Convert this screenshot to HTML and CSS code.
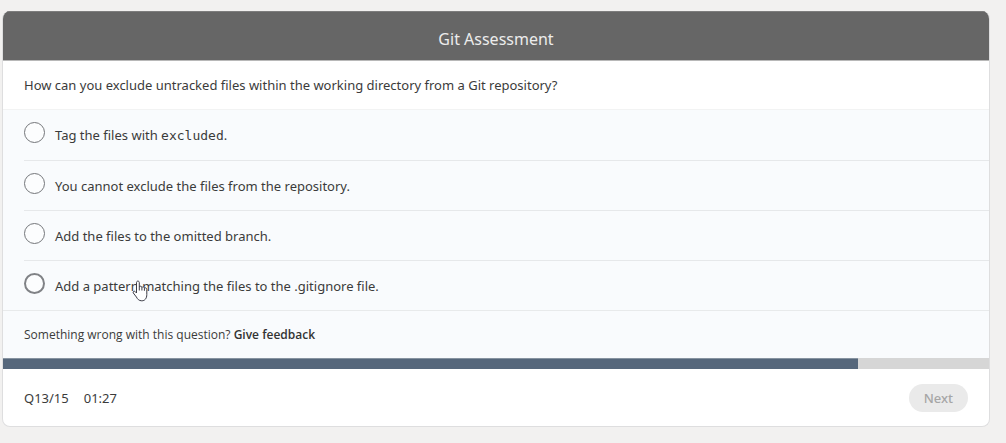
FILE: index.html
```html
<!DOCTYPE html>
<html lang="en">
<head>
<meta charset="utf-8">
<title>Git Assessment</title>
<link rel="stylesheet" href="styles.css">
</head>
<body>
<main class="card">
  <header class="card-header"><h1 class="title">Git Assessment</h1></header>
  <form class="quiz">
    <h2 class="question" id="question">How can you exclude untracked files within the working directory from a Git repository?</h2>
    <div class="options" role="radiogroup" aria-labelledby="question">
      <label class="option"><input class="radio" type="radio" name="answer"><span class="answer">Tag the files with <code class="code">excluded</code>.</span></label>
      <label class="option"><input class="radio" type="radio" name="answer"><span class="answer">You cannot exclude the files from the repository.</span></label>
      <label class="option"><input class="radio" type="radio" name="answer"><span class="answer">Add the files to the omitted branch.</span></label>
      <label class="option option-hover"><input class="radio" type="radio" name="answer"><span class="answer">Add a pattern matching the files to the .gitignore file.</span>
        <svg class="pointer" width="16" height="22" viewBox="0 0 16 22" aria-hidden="true"><path d="M4.5 13V2.6C4.5.6 7.3.6 7.3 2.6V7C7.6 5.8 9.8 5.9 9.9 7.5 10.4 6.3 12.4 6.7 12.4 8.2 13.1 7.4 14.8 7.8 14.8 9.4V14.5C14.8 18.5 12.8 20.8 9.8 20.8 6.8 20.8 5.5 19 4.4 17L1.3 13C.5 11.7 2.1 10.6 3.2 11.6ZM7.3 7V10.5M9.9 7.5V10.5M12.4 8.2V10.8"/></svg>
      </label>
    </div>
    <p class="feedback">Something wrong with this question? <a class="feedback-link" href="#feedback">Give feedback</a></p>
    <div class="progress" role="progressbar" aria-label="Quiz progress" aria-valuemin="0" aria-valuemax="15" aria-valuenow="13"><div class="progress-fill" style="width: 86.67%"></div></div>
    <footer class="card-footer">
      <span>Q13/15</span>
      <time class="timer">01:27</time>
      <button class="next" type="submit" disabled>Next</button>
    </footer>
  </form>
</main>
</body>
</html>
```

FILE: styles.css
```css
* {
  box-sizing: border-box;
}

body {
  margin: 0;
  padding: 11px 16px 16px 2px;
  background: #f2f1f0;
  color: #3b3b3b;
  font: 13px/20px "Noto Sans", "Open Sans", sans-serif;
}

.card {
  overflow: hidden;
  border: 1px solid #dededf;
  border-top: 0;
  border-radius: 8px;
  background: #fff;
}

.card-header {
  padding: 15px 20px 9px;
  border-top: 1px solid #7d7d7d;
  border-bottom: 1px solid #b8b8b8;
  background: #666;
  color: #ececec;
  text-align: center;
}

.title {
  margin: 0;
  font-size: 16px;
  font-weight: 400;
  line-height: 24px;
}

.question {
  margin: 0;
  padding: 14px 21px;
  border-bottom: 1px solid #f2f3f3;
  font-size: 13px;
  font-weight: 400;
}

.options {
  padding: 0 0 0 21px;
  border-bottom: 1px solid #e8eaeb;
  background: #f9fbfd;
}

.option {
  display: flex;
  position: relative;
  align-items: flex-start;
  gap: 10px;
  padding: 12px 0 14px;
  border-bottom: 1px solid #e6e8ea;
}

.option:last-child {
  border-bottom: 0;
}

.radio {
  flex: none;
  width: 21px;
  height: 21px;
  margin: 0;
  appearance: none;
  border: 1px solid #74767a;
  border-radius: 50%;
  background: #fcfdfe;
}

.option-hover .radio {
  border: 2px solid #808286;
}

.answer {
  padding-top: 3px;
}

.code {
  font: 13px/20px "DejaVu Sans Mono", monospace;
}

.pointer {
  position: absolute;
  top: 19px;
  left: 108px;
  fill: #fff;
  stroke: #3c3c46;
  stroke-linejoin: round;
}

.feedback {
  margin: 0;
  padding: 14px 21px 13px;
  background: #f9fbfd;
  font-family: "Open Sans", "Noto Sans", sans-serif;
  font-size: 12px;
}

.feedback-link {
  color: #333;
  font-weight: 600;
  text-decoration: none;
}

.progress {
  height: 11px;
  background: #d6d6d6;
}

.progress-fill {
  height: 100%;
  border-top: 1px solid #8793a0;
  background: #56677b;
}

.card-footer {
  display: flex;
  align-items: center;
  gap: 15px;
  padding: 15px 21px 14px;
}

.next {
  margin-left: auto;
  padding: 4px 15px;
  border: 0;
  border-radius: 14px;
  background: #eaeaea;
  color: #a6a6a6;
  font: 500 13px/20px "Noto Sans", "Open Sans", sans-serif;
}
```
